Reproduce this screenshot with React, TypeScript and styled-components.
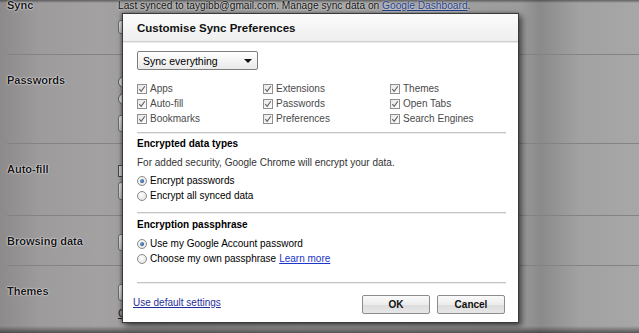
import React from "react";
import styled, { createGlobalStyle } from "styled-components";

const Global = createGlobalStyle`
  html, body { margin: 0; padding: 0; width: 639px; height: 333px; overflow: hidden; }
  body { font-family: "Liberation Sans", Arial, sans-serif; }
`;

const Page = styled.div`
  position: relative;
  width: 639px;
  height: 333px;
  overflow: hidden;
  background:
    linear-gradient(to bottom, rgba(40,40,40,0.55) 0, rgba(40,40,40,0) 3px, rgba(40,40,40,0) 326px, rgba(30,30,30,0.6) 333px),
    linear-gradient(to right, #8c8a8a 0, #9d9b9b 40px, #a3a1a1 100px, #9e9c9c 130px, #a5a5a5 300px, #9c9c9c 520px, #8a8a8a 540px, #a2a2a2 580px, #a7a7a7 639px);
`;

const SettingsList = styled.div`
  margin-top: -21px;
  padding-left: 7px;
`;

const Row = styled.div<{ $h: number }>`
  display: flex;
  box-sizing: border-box;
  height: ${(p) => p.$h}px;
  border-top: 1px solid #848282;
`;

const RowLabel = styled.div`
  width: 111px;
  flex: none;
  padding-top: 18px;
  font-size: 11px;
  font-weight: bold;
  line-height: 15px;
  color: #151515;
  text-shadow: 0 0 2px rgba(255, 255, 255, 0.95), 0 0 1px #fff;
`;

const RowContent = styled.div`
  padding-top: 18px;
  display: flex;
  flex-direction: column;
  align-items: flex-start;
`;

const SyncText = styled.div`
  font-size: 10.2px;
  line-height: 15px;
  color: #111;
  white-space: nowrap;
  text-shadow: 0 0 2px rgba(255, 255, 255, 0.9);
`;

const BgLink = styled.span`
  color: #23408f;
  text-decoration: underline;
`;

const BgButton = styled.div<{ $mt: number; $h: number }>`
  margin-top: ${(p) => p.$mt}px;
  width: 90px;
  height: ${(p) => p.$h}px;
  box-sizing: border-box;
  border: 1px solid #6a6a6a;
  border-radius: 3px;
  background: linear-gradient(#e8e8e8, #c4c4c4);
`;

const BgRadio = styled.div<{ $mt: number }>`
  margin-top: ${(p) => p.$mt}px;
  width: 10px;
  height: 10px;
  border-radius: 50%;
  border: 1px solid #555;
  background: #ddd;
`;

const BgCheck = styled.div<{ $mt: number }>`
  margin-top: ${(p) => p.$mt}px;
  width: 10px;
  height: 10px;
  border: 1px solid #444;
  background: #ccc;
`;

const BgSmallText = styled.div`
  margin-top: 5px;
  font-size: 11px;
  line-height: 15px;
  color: #222;
  text-decoration: underline;
`;

/* ---------- Dialog ---------- */

const Dialog = styled.div`
  position: absolute;
  left: 122px;
  top: 13px;
  width: 397px;
  height: 310px;
  box-sizing: border-box;
  background: #fff;
  border: 1px solid #3a3a3a;
  box-shadow: 3px 3px 6px rgba(0, 0, 0, 0.55), -1px 0 3px rgba(0, 0, 0, 0.35);
  display: flex;
  flex-direction: column;
  color: #000;
`;

const Header = styled.div`
  height: 28px;
  box-sizing: border-box;
  flex: none;
  display: flex;
  align-items: center;
  padding-left: 14px;
  background: linear-gradient(#fbfbfb, #efefef);
  border-bottom: 1px solid #cfcfcf;
  box-shadow: 0 1px 0 #ececec;
`;

const Title = styled.div`
  font-size: 11.5px;
  font-weight: bold;
  color: #111;
`;

const Body = styled.div`
  padding: 9px 12px 0 14px;
  display: flex;
  flex-direction: column;
`;

const Select = styled.div`
  width: 121px;
  height: 19px;
  box-sizing: border-box;
  border: 1px solid #7d7d7d;
  border-radius: 2px;
  background: linear-gradient(#ffffff, #e9e9e9);
  display: flex;
  align-items: center;
  justify-content: space-between;
  padding: 0 5px 0 5px;
  font-size: 10.5px;
  color: #000;
`;

const Arrow = styled.span`
  width: 0;
  height: 0;
  border-left: 4px solid transparent;
  border-right: 4px solid transparent;
  border-top: 4px solid #111;
`;

const CheckGrid = styled.div`
  margin-top: 11px;
  display: grid;
  grid-template-columns: 126px 127px 1fr;
  grid-auto-rows: 15px;
`;

const Option = styled.div`
  display: flex;
  align-items: center;
  font-size: 10px;
  white-space: nowrap;
`;

const CheckLabel = styled.span`
  margin-left: 3px;
  color: #4a4a4a;
`;

const Box = styled.span`
  width: 10px;
  height: 10px;
  box-sizing: border-box;
  border: 1px solid #8f8f8f;
  background: linear-gradient(135deg, #e8e8e8, #fdfdfd);
  display: flex;
  align-items: center;
  justify-content: center;
`;

const Divider = styled.div<{ $mt: number }>`
  margin-top: ${(p) => p.$mt}px;
  height: 1px;
  background: #c4c4c4;
  box-shadow: 0 1px 0 #ededed;
`;

const Heading = styled.div<{ $mt: number }>`
  margin-top: ${(p) => p.$mt}px;
  font-size: 10px;
  font-weight: bold;
  line-height: 15px;
  color: #000;
`;

const Desc = styled.div`
  margin-top: 4px;
  font-size: 10px;
  line-height: 15px;
  color: #333;
`;

const RadioGroup = styled.div<{ $mt: number }>`
  margin-top: ${(p) => p.$mt}px;
  display: flex;
  flex-direction: column;
`;

const RadioRow = styled.div`
  height: 15px;
  display: flex;
  align-items: center;
  font-size: 10px;
  color: #000;
  white-space: nowrap;
`;

const RadioDot = styled.span<{ $on?: boolean }>`
  width: 10px;
  height: 10px;
  box-sizing: border-box;
  border-radius: 50%;
  border: 1px solid #8a8a8a;
  background: radial-gradient(circle at 40% 35%, #ffffff, #dcdcdc);
  display: flex;
  align-items: center;
  justify-content: center;
  margin-right: 3px;
  &::after {
    content: "";
    display: ${(p) => (p.$on ? "block" : "none")};
    width: 4px;
    height: 4px;
    border-radius: 50%;
    background: radial-gradient(circle at 35% 35%, #6fa2e0, #173a6c);
  }
`;

const InlineLink = styled.a`
  margin-left: 3px;
  color: #1a36c8;
  text-decoration: underline;
`;

const Footer = styled.div`
  padding: 12px 13px 0 10px;
  display: flex;
  align-items: flex-start;
`;

const FooterLink = styled.a`
  font-size: 10px;
  line-height: 15px;
  color: #1f2f9a;
  text-decoration: underline;
  margin-right: auto;
`;

const Button = styled.button`
  width: 68px;
  height: 19px;
  box-sizing: border-box;
  margin-left: 7px;
  padding: 0;
  border: 1px solid #8c8c8c;
  border-radius: 2px;
  background: linear-gradient(#fafafa 0%, #ececec 50%, #dcdcdc 51%, #e6e6e6 100%);
  font-family: "Liberation Sans", Arial, sans-serif;
  font-size: 10px;
  font-weight: bold;
  color: #111;
`;

const Check = () => (
  <Box>
    <svg width="8" height="8" viewBox="0 0 8 8">
      <path d="M1.3 4.2 L3.2 6.3 L6.8 1.2" fill="none" stroke="#606060" strokeWidth="1.1" />
    </svg>
  </Box>
);

const items = [
  ["Apps", "Extensions", "Themes"],
  ["Auto-fill", "Passwords", "Open Tabs"],
  ["Bookmarks", "Preferences", "Search Engines"],
];

export default function App() {
  return (
    <Page>
      <Global />
      <SettingsList>
        <Row $h={75}>
          <RowLabel>Sync</RowLabel>
          <RowContent>
            <SyncText>
              Last synced to taygibb@gmail.com. Manage sync data on <BgLink>Google Dashboard</BgLink>.
            </SyncText>
            <BgButton $mt={7} $h={14} />
          </RowContent>
        </Row>
        <Row $h={89}>
          <RowLabel>Passwords</RowLabel>
          <RowContent>
            <BgRadio $mt={3} />
            <BgRadio $mt={5} />
            <BgButton $mt={10} $h={17} />
          </RowContent>
        </Row>
        <Row $h={72}>
          <RowLabel>Auto-fill</RowLabel>
          <RowContent>
            <BgCheck $mt={3} />
            <BgButton $mt={5} $h={18} />
          </RowContent>
        </Row>
        <Row $h={50}>
          <RowLabel>Browsing data</RowLabel>
          <RowContent>
            <BgButton $mt={0} $h={17} />
          </RowContent>
        </Row>
        <Row $h={80}>
          <RowLabel>Themes</RowLabel>
          <RowContent>
            <BgButton $mt={0} $h={17} />
            <BgSmallText>Get themes</BgSmallText>
          </RowContent>
        </Row>
      </SettingsList>

      <Dialog>
        <Header>
          <Title>Customise Sync Preferences</Title>
        </Header>
        <Body>
          <Select>
            <span>Sync everything</span>
            <Arrow />
          </Select>
          <CheckGrid>
            {items.flat().map((label) => (
              <Option key={label}>
                <Check />
                <CheckLabel>{label}</CheckLabel>
              </Option>
            ))}
          </CheckGrid>
          <Divider $mt={6} />
          <Heading $mt={3}>Encrypted data types</Heading>
          <Desc>For added security, Google Chrome will encrypt your data.</Desc>
          <RadioGroup $mt={3}>
            <RadioRow>
              <RadioDot $on />
              Encrypt passwords
            </RadioRow>
            <RadioRow>
              <RadioDot />
              Encrypt all synced data
            </RadioRow>
          </RadioGroup>
          <Divider $mt={9} />
          <Heading $mt={4}>Encryption passphrase</Heading>
          <RadioGroup $mt={4}>
            <RadioRow>
              <RadioDot $on />
              Use my Google Account password
            </RadioRow>
            <RadioRow>
              <RadioDot />
              Choose my own passphrase
              <InlineLink>Learn more</InlineLink>
            </RadioRow>
          </RadioGroup>
          <Divider $mt={16} />
        </Body>
        <Footer>
          <FooterLink>Use default settings</FooterLink>
          <Button>OK</Button>
          <Button>Cancel</Button>
        </Footer>
      </Dialog>
    </Page>
  );
}
